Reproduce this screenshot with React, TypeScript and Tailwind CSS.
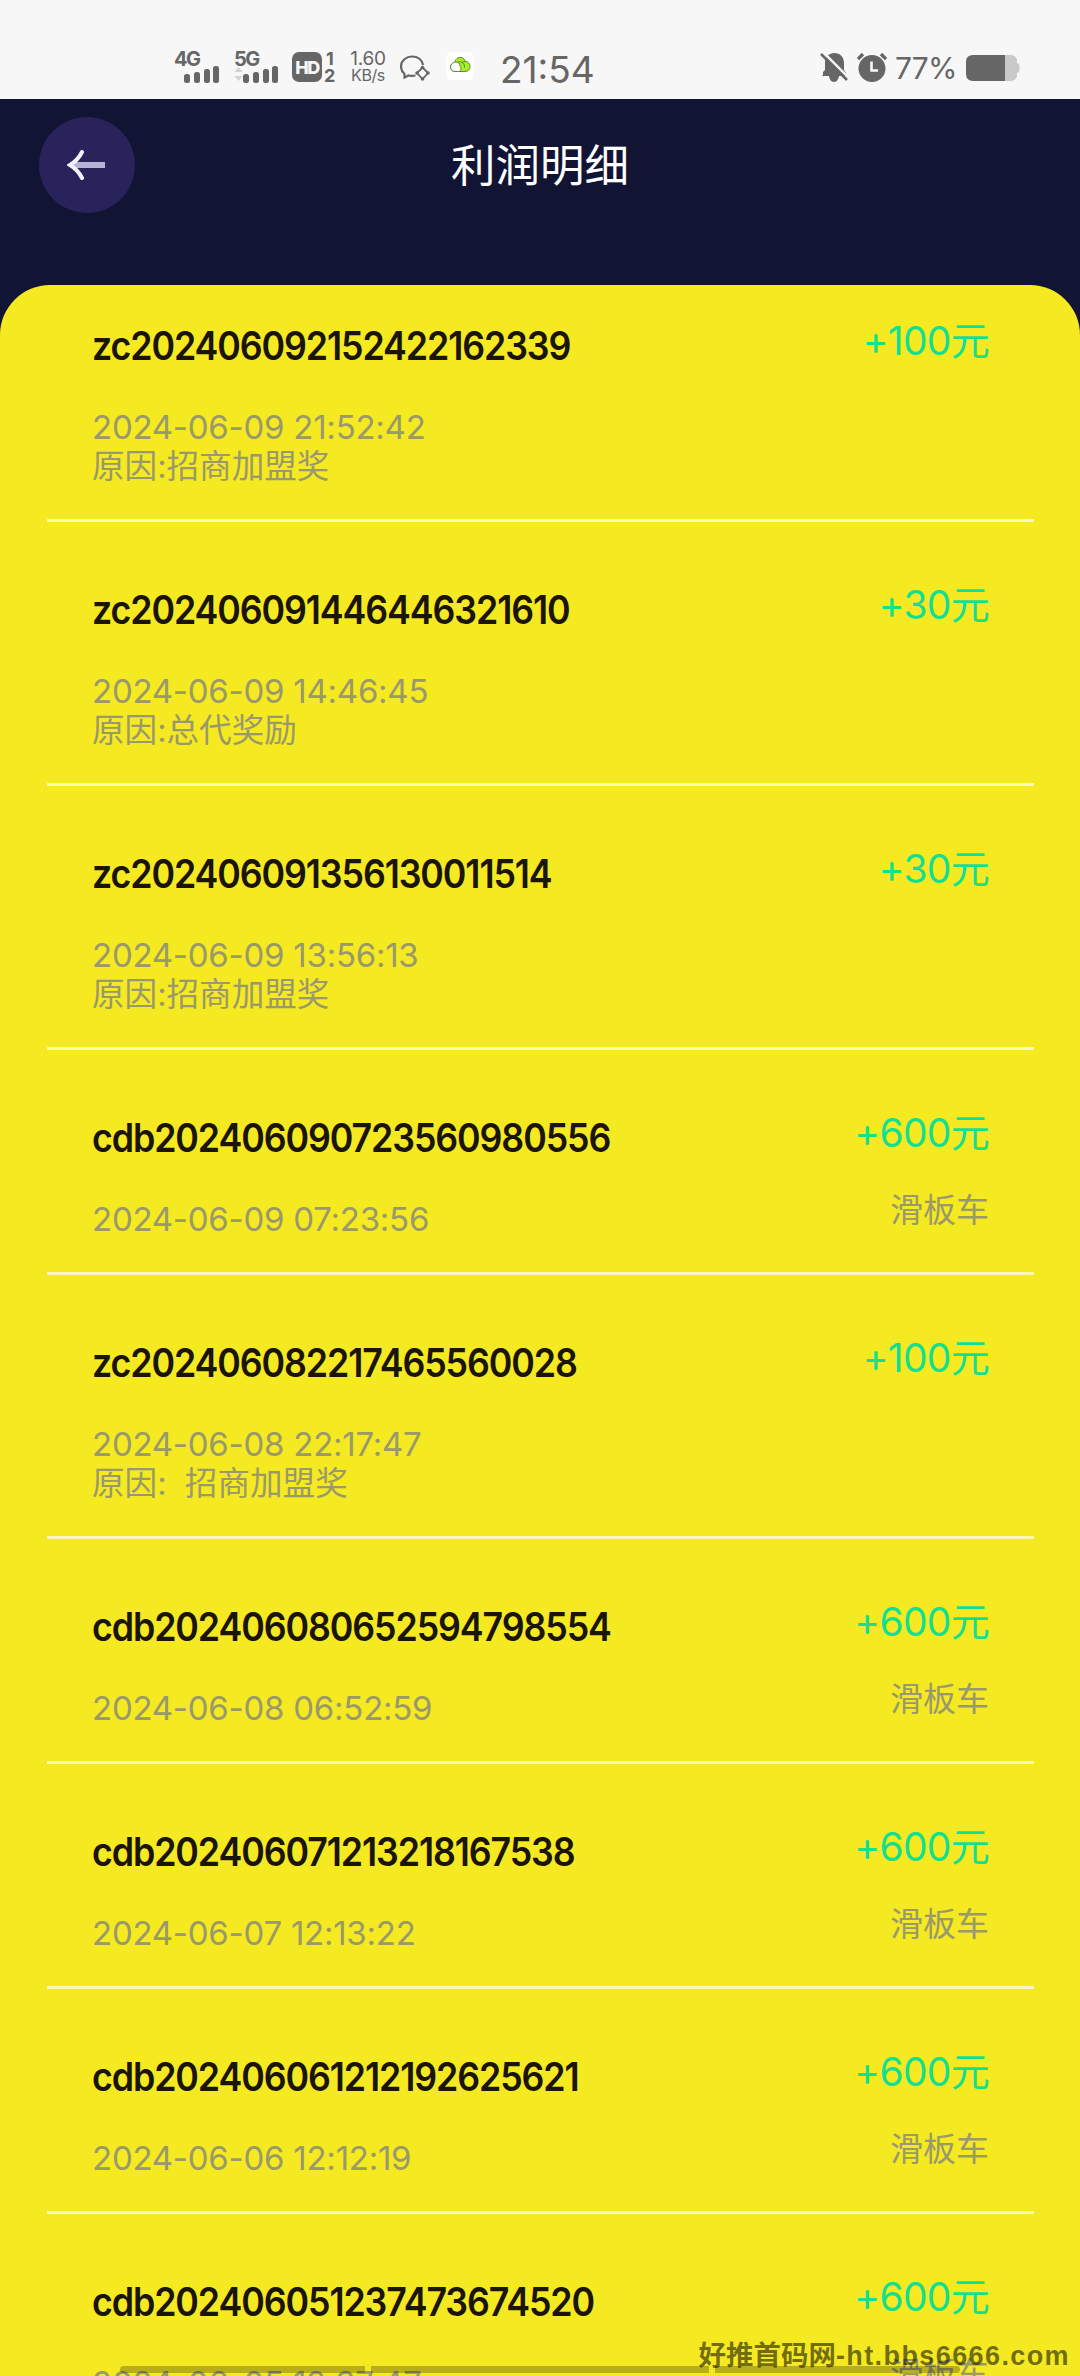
import React from "react";

type ProfitRecord = {
  id: string;
  time: string;
  amount: string;
  reason?: string;
  product?: string;
};

const records: ProfitRecord[] = [
  { id: "zc202406092152422162339", time: "2024-06-09 21:52:42", amount: "+100元", reason: "原因:招商加盟奖" },
  { id: "zc202406091446446321610", time: "2024-06-09 14:46:45", amount: "+30元", reason: "原因:总代奖励" },
  { id: "zc202406091356130011514", time: "2024-06-09 13:56:13", amount: "+30元", reason: "原因:招商加盟奖" },
  { id: "cdb202406090723560980556", time: "2024-06-09 07:23:56", amount: "+600元", product: "滑板车" },
  { id: "zc202406082217465560028", time: "2024-06-08 22:17:47", amount: "+100元", reason: "原因:  招商加盟奖" },
  { id: "cdb202406080652594798554", time: "2024-06-08 06:52:59", amount: "+600元", product: "滑板车" },
  { id: "cdb202406071213218167538", time: "2024-06-07 12:13:22", amount: "+600元", product: "滑板车" },
  { id: "cdb202406061212192625621", time: "2024-06-06 12:12:19", amount: "+600元", product: "滑板车" },
  { id: "cdb202406051237473674520", time: "2024-06-05 12:37:47", amount: "+600元", product: "滑板车" },
];

const SignalIcon = () => (
  <svg viewBox="0 0 36 17" className="h-[17px] w-9" fill="#666666">
    <rect x="0" y="8" width="6" height="9" rx="2.5" />
    <rect x="10" y="6" width="6" height="11" rx="2.5" />
    <rect x="20" y="3" width="6" height="14" rx="2.5" />
    <rect x="29" y="0" width="6" height="17" rx="2.5" />
  </svg>
);

const DataArrowsIcon = () => (
  <svg viewBox="0 0 9 16" className="h-4 w-[9px]" fill="#d3d3d3">
    <path d="M4.500 1L8.500 6H0.500Z" />
    <path d="M4.500 15L8.500 10H0.500Z" />
  </svg>
);

const ChatIcon = () => (
  <svg viewBox="0 0 30 26" className="h-[26px] w-[30px]" fill="none" stroke="#666666" strokeWidth="2.2">
    <path d="M23 10C22 4.500 17.500 1.500 12 1.500S1 5.500 1 11.500C1 14.500 2.300 17 4.500 19V22.500L8.500 20.500C11 21.200 13 21 15.500 20.500" />
    <path d="M22.500 12.500L28 18L22.500 24L17 18Z" strokeWidth="1.8" />
    <g fill="#666666" stroke="none">
      <circle cx="22.500" cy="12.500" r="1.800" />
      <circle cx="28" cy="18" r="1.800" />
      <circle cx="22.500" cy="24" r="1.800" />
      <circle cx="17" cy="18" r="1.800" />
    </g>
  </svg>
);

const CloudIcon = () => (
  <svg viewBox="0 0 28 28" className="h-7 w-7">
    <rect width="28" height="28" rx="6" fill="#ffffff" />
    <path d="M9 11C9 7 12 5 15 5.500C18 6 19 8 19 9.500C22.500 9.500 24 12 24 14.500C24 17.500 22 19.500 19 19.500H9C6 19.500 4.500 17 4.500 15C4.500 12.500 6.500 11 9 11Z" fill="#a4f022" stroke="#5d8a2c" strokeWidth="1" />
    <path d="M9 10C12 9.500 14 11.500 14 14C15.500 15.500 15.500 19.500 12.500 19.500H9C6 19.500 4.500 17 4.500 15C4.500 12.500 6.500 10.500 9 10Z" fill="#ffffff" stroke="#5d8a2c" strokeWidth="1" />
    <path d="M12 10C15.500 9 19 11.500 18.500 15.500M19 9.500C17.500 9.500 16.500 10 16 11" fill="none" stroke="#5d8a2c" strokeWidth="1" />
  </svg>
);

const MuteIcon = () => (
  <svg viewBox="0 0 28 30" className="h-[30px] w-7">
    <path d="M3 23V20L5 18V11C5 5 9 1 14.500 1S24 5 24 11V18L26 21V24H19C18.500 27 17 30 14 30S9.500 27 9 24H2Z" fill="#666666" />
    <path d="M3 0L30 27" stroke="#f7f7f7" strokeWidth="2.500" />
    <path d="M1 2L27 28" stroke="#666666" strokeWidth="2.500" />
  </svg>
);

const AlarmIcon = () => (
  <svg viewBox="0 0 30 30" className="h-[30px] w-[30px]">
    <circle cx="15" cy="16.500" r="13.500" fill="#666666" />
    <path d="M1 7L6 2M24 2L29 7" stroke="#666666" strokeWidth="3.200" />
    <path d="M14.500 9.500V18.500H21" fill="none" stroke="#f7f7f7" strokeWidth="2.600" />
  </svg>
);

const BatteryIcon = () => (
  <svg viewBox="0 0 54 28" className="h-7 w-[54px]">
    <path d="M39 1H44Q50 1 51 6V9Q53.500 9.500 53.500 12V16Q53.500 18.500 51 19V22Q50 27 44 27H39Z" fill="#c9c9c9" />
    <path d="M7 1H39V27H7Q0 27 0 20V8Q0 1 7 1Z" fill="#666666" />
  </svg>
);

const StatusBar = () => (
  <div className="flex h-[99px] flex-none bg-[#f7f7f7] pl-[174px] pr-[60px] text-[#666666]">
    <div className="mt-[52px] w-[60px]">
      <div className="h-[14px] text-[20px] font-bold leading-[14px] tracking-[-1.5px]">4G</div>
      <div className="pl-[10px]">
        <SignalIcon />
      </div>
    </div>
    <div className="mt-[52px] w-[58px]">
      <div className="h-[14px] text-[20px] font-bold leading-[14px] tracking-[-1.5px]">5G</div>
      <div className="flex">
        <DataArrowsIcon />
        <SignalIcon />
      </div>
    </div>
    <div className="mt-[52px] flex h-[30px] w-[30px] items-center justify-center rounded-[7px] bg-[#666666] text-[18px] font-extrabold tracking-[-1.5px] text-[#f7f7f7]">
      HD
    </div>
    <div className="ml-[2px] mt-[50px] w-[26px] text-[18px] font-bold leading-[17px]">
      <div className="pl-0.5">1</div>
      <div>2</div>
    </div>
    <div className="mt-[51px] w-9 text-center">
      <div className="text-[19px] leading-4 tracking-[-0.3px]">1.60</div>
      <div className="text-[16px] leading-[17px] tracking-[-0.4px]">KB/s</div>
    </div>
    <div className="ml-[14px] mt-[55px]">
      <ChatIcon />
    </div>
    <div className="ml-4 mt-[52px]">
      <CloudIcon />
    </div>
    <div className="ml-[26px] mt-[49px] text-[37px] leading-[42px]">21:54</div>
    <div className="ml-auto mt-[52px] flex">
      <MuteIcon />
      <div className="ml-[9px]">
        <AlarmIcon />
      </div>
      <div className="ml-[8px] w-[61px] text-[30px] leading-[33px] tracking-[-0.8px]">77%</div>
      <div className="ml-2.5 mt-[2px]">
        <BatteryIcon />
      </div>
    </div>
  </div>
);

const Header = () => (
  <div className="grid h-[186px] flex-none grid-cols-[1fr_auto_1fr] items-start bg-[#121433] px-[39px] pt-[18px]">
    <div className="flex size-24 items-center justify-center rounded-full bg-[#29235c]">
      <svg viewBox="0 0 40 32" className="h-8 w-10" fill="none">
        <path d="M5 16H38" stroke="#b5b2d6" strokeWidth="6" />
        <path d="M15 3C12 9 8 13 3 16C8 19 12 23 15 29" stroke="#f3f2fb" strokeWidth="4" strokeLinecap="round" />
      </svg>
    </div>
    <div className="pt-[21px] text-[44.5px] leading-[56px] text-white">利润明细</div>
  </div>
);

const RecordRow = ({ record }: { record: ProfitRecord }) => (
  <div className="border-b-[3px] border-[#fdf8b8] px-[45px] pt-[59px]">
    <div className="flex h-[163px] justify-between">
      <div className="pt-[5px]">
        <div className="origin-left scale-x-[0.905] whitespace-nowrap text-[39.5px] font-semibold leading-[48px] tracking-[-1.2px] text-[#1a1506]">
          {record.id}
        </div>
        <div className="mt-[38px] text-[33px] leading-[39px] tracking-[-0.25px] text-[#99996a]">{record.time}</div>
        {record.reason && (
          <div className="whitespace-pre text-[32.6px] leading-[39px] text-[#99996a]">{record.reason}</div>
        )}
      </div>
      <div className="text-right">
        <div className="text-[39px] leading-[48px] tracking-[-0.7px] text-[#12e08e]">{record.amount}</div>
        {record.product && (
          <div className="mt-[34px] text-[33px] leading-[39px] text-[#99996a]">{record.product}</div>
        )}
      </div>
    </div>
    {record.reason && <div className="h-[39px]" />}
  </div>
);

const App = () => {
  return (
    <div className="relative flex h-[2376px] w-[1080px] flex-col overflow-hidden bg-[#121433] font-['Inter','Noto_Sans_CJK_SC',sans-serif]">
      <StatusBar />
      <Header />
      <div className="flex-1 overflow-hidden rounded-t-[50px] bg-[#f5e922] pl-[47px] pr-[46px]">
        <div className="-mt-[27px]">
          {records.map((record) => (
            <RecordRow key={record.id} record={record} />
          ))}
        </div>
      </div>
      <div className="absolute bottom-[3px] left-[120px] flex h-[7px] w-[840px] gap-1.5">
        <div className="w-[245px] rounded-l-full bg-black/25" />
        <div className="w-[338px] bg-black/25" />
        <div className="flex-1 rounded-r-full bg-black/25" />
      </div>
      <div className="absolute -bottom-1 right-[10px] whitespace-nowrap font-bold leading-[42px] text-black/55">
        <span className="text-[27.5px]">好推首码网</span>
        <span className="font-['Liberation_Sans',sans-serif] text-[27px] tracking-[1.4px]">-ht.bbs6666.com</span>
      </div>
    </div>
  );
};

export default App;
